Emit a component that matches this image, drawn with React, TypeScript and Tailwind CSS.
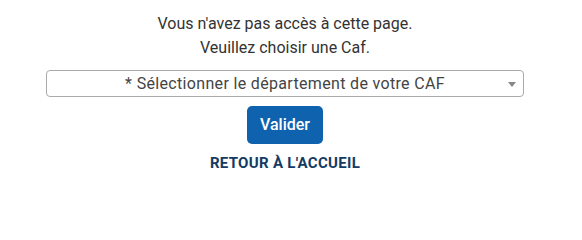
export default function App() {
  return (
    <div className="w-[582px] h-[206px] bg-white pr-[12px] pt-[12px]" style={{ fontFamily: "Roboto, 'Liberation Sans', sans-serif" }}>
      <div className="flex flex-col items-center">
        <p className="text-[16px] leading-[24px] text-[#333333] text-center">
          Vous n'avez pas accès à cette page.
          <br />
          Veuillez choisir une Caf.
        </p>
        <div className="relative mt-[10px] w-[478px] h-[27px] rounded-[4px] border border-[#aaaaaa] flex items-center justify-center">
          <span className="text-[16px] tracking-[0.33px] text-[#444444] leading-none">* Sélectionner le département de votre CAF</span>
          <svg className="absolute right-[7px] top-[11px]" width="8" height="5" viewBox="0 0 8 5">
            <polygon points="0,0 8,0 4,5" fill="#888888" />
          </svg>
        </div>
        <button className="mt-[9px] w-[76px] h-[38px] rounded-[5px] bg-[#0f62ae] text-white text-[16px] font-medium">
          Valider
        </button>
        <a className="mt-[9px] text-[15px] leading-[20px] font-bold tracking-[0.3px] text-[#133b63] uppercase">
          Retour à l'accueil
        </a>
      </div>
    </div>
  );
}
